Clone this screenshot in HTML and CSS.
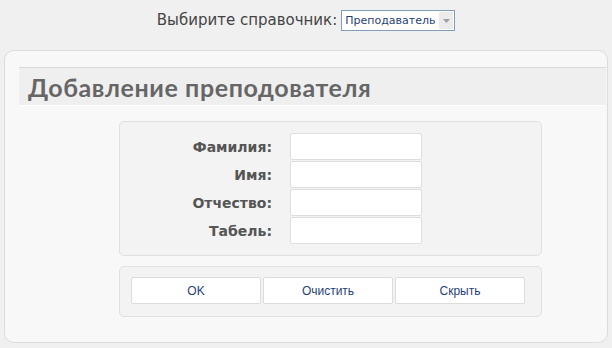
FILE: index.html
```html
<!DOCTYPE html>
<html lang="ru">
  <head>
    <meta charset="UTF-8">
    <title>Справочники</title>
    <link rel="stylesheet" href="styles.css">
  </head>
  <body>
    <!-- Выбор справочника -->
    <div class="chooser">
      <label for="dict">Выбирите справочник:</label>
      <div class="select">
        <span class="select-value">Преподаватель</span>
        <span class="select-arrow"><svg width="7" height="4" viewBox="0 0 7 4"><path d="M0 0h7L3.5 4z" fill="#9aa0a8"/></svg></span>
      </div>
    </div>

    <div class="panel">
      <h1 class="panel-title">Добавление преподователя</h1>

      <div class="box form-box">
        <div class="row"><span class="label">Фамилия:</span><input class="field" type="text"></div>
        <div class="row"><span class="label">Имя:</span><input class="field" type="text"></div>
        <div class="row"><span class="label">Отчество:</span><input class="field" type="text"></div>
        <div class="row"><span class="label">Табель:</span><input class="field" type="text"></div>
      </div>

      <div class="box buttons-box">
        <button class="btn">OK</button>
        <button class="btn">Очистить</button>
        <button class="btn">Скрыть</button>
      </div>
    </div>
  </body>
</html>
```

FILE: styles.css
```css
/* Page */
body {
    margin: 0;
    padding: 0 4px;
    background: #f0f0f0;
    font-family: "Lato", "DejaVu Sans", sans-serif;
    color: #555;
}

/* Top chooser line */
.chooser {
    height: 50px;
    display: flex;
    justify-content: center;
    align-items: flex-start;
    padding-top: 10px;
    box-sizing: border-box;
}

.chooser label {
    font-family: "DejaVu Sans", sans-serif;
    font-size: 15px;
    color: #444;
    line-height: 21px;
    margin-right: 4px;
}

.select {
    display: flex;
    width: 114px;
    height: 21px;
    box-sizing: border-box;
    border: 1px solid #7f9db9;
    background: #fff;
}

.select-value {
    flex: 1;
    font-family: "DejaVu Sans", sans-serif;
    font-size: 11px;
    color: #1f3f7a;
    line-height: 19px;
    padding-left: 3px;
}

.select-arrow {
    width: 14px;
    margin: 1px;
    background: #ebebeb;
    display: flex;
    align-items: center;
    justify-content: center;
}

/* Main panel */
.panel {
    background: #f8f8f8;
    border: 1px solid #dcdcdc;
    border-radius: 10px;
    height: 293px;
    box-sizing: border-box;
    padding: 16px 1px 0 14px;
}

.panel-title {
    margin: 0;
    background: #efefef;
    border-top: 1px solid #dadada;
    border-bottom: 1px solid #fff;
    height: 39px;
    box-sizing: border-box;
    padding-left: 9px;
    font-size: 25px;
    line-height: 38px;
    font-weight: bold;
    letter-spacing: 0.6px;
    color: #666;
}

/* Inner boxes */
.box {
    width: 423px;
    margin-left: 100px;
    box-sizing: border-box;
    background: #f3f3f3;
    border: 1px solid #e0e0e0;
    border-radius: 5px;
}

.form-box {
    margin-top: 15px;
    height: 135px;
    padding-top: 11px;
    display: flex;
    flex-direction: column;
    gap: 1px;
}

.row {
    display: flex;
    align-items: center;
}

.label {
    width: 152px;
    text-align: right;
    font-family: "DejaVu Sans", sans-serif;
    font-size: 14px;
    font-weight: bold;
    color: #555;
}

.field {
    margin-left: 18px;
    width: 132px;
    height: 27px;
    box-sizing: border-box;
    border: 1px solid #dedede;
    border-radius: 2px;
    background: #fff;
}

.buttons-box {
    margin-top: 10px;
    height: 51px;
    padding: 10px 0 0 11px;
    display: flex;
    gap: 2px;
    align-items: flex-start;
}

.btn {
    width: 130px;
    height: 27px;
    margin: 0;
    background: #fff;
    border: 1px solid #dcdcdc;
    border-radius: 2px;
    font-family: "Liberation Sans", sans-serif;
    font-size: 12px;
    color: #1f3f7a;
}
```
